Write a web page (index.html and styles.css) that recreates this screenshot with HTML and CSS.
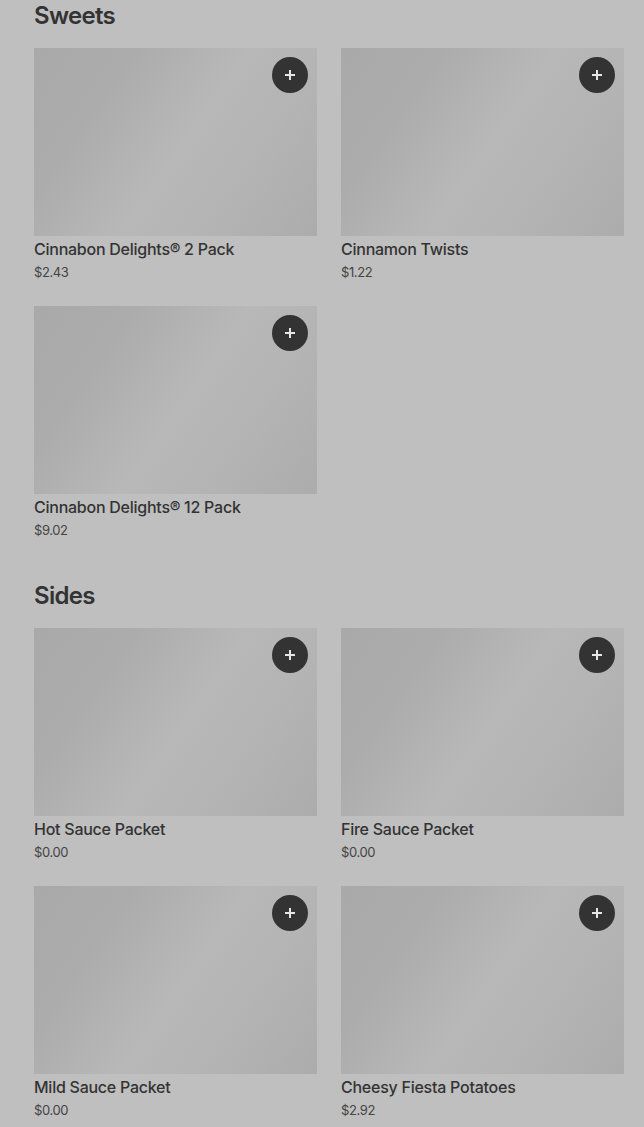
FILE: index.html
```html
<!DOCTYPE html>
<html lang="en">
<head>
  <meta charset="UTF-8" />
  <meta name="viewport" content="width=device-width, initial-scale=1.0" />
  <title>Menu</title>
  <link rel="stylesheet" href="styles.css">
</head>
<body>
  <section class="section">
    <h2 class="section-title">Sweets</h2>
    <div class="grid">
      <div class="item">
        <div class="thumb"><button class="add"><svg viewBox="0 0 12 12"><path d="M6 1v10M1 6h10" /></svg></button></div>
        <div class="name">Cinnabon Delights® 2 Pack</div>
        <div class="price">$2.43</div>
      </div>
      <div class="item">
        <div class="thumb"><button class="add"><svg viewBox="0 0 12 12"><path d="M6 1v10M1 6h10" /></svg></button></div>
        <div class="name">Cinnamon Twists</div>
        <div class="price">$1.22</div>
      </div>
      <div class="item">
        <div class="thumb"><button class="add"><svg viewBox="0 0 12 12"><path d="M6 1v10M1 6h10" /></svg></button></div>
        <div class="name">Cinnabon Delights® 12 Pack</div>
        <div class="price">$9.02</div>
      </div>
    </div>
  </section>

  <section class="section">
    <h2 class="section-title">Sides</h2>
    <div class="grid">
      <div class="item">
        <div class="thumb"><button class="add"><svg viewBox="0 0 12 12"><path d="M6 1v10M1 6h10" /></svg></button></div>
        <div class="name">Hot Sauce Packet</div>
        <div class="price">$0.00</div>
      </div>
      <div class="item">
        <div class="thumb"><button class="add"><svg viewBox="0 0 12 12"><path d="M6 1v10M1 6h10" /></svg></button></div>
        <div class="name">Fire Sauce Packet</div>
        <div class="price">$0.00</div>
      </div>
      <div class="item">
        <div class="thumb"><button class="add"><svg viewBox="0 0 12 12"><path d="M6 1v10M1 6h10" /></svg></button></div>
        <div class="name">Mild Sauce Packet</div>
        <div class="price">$0.00</div>
      </div>
      <div class="item">
        <div class="thumb"><button class="add"><svg viewBox="0 0 12 12"><path d="M6 1v10M1 6h10" /></svg></button></div>
        <div class="name">Cheesy Fiesta Potatoes</div>
        <div class="price">$2.92</div>
      </div>
    </div>
  </section>
</body>
</html>
```

FILE: styles.css
```css
body {
  margin: 0;
  padding: 0 20px 0 34px;
  background: #bfbfbf;
  font-family: Inter, "Noto Sans", sans-serif;
  color: #333;
}

.section {
  margin-bottom: 38px;
}

.section-title {
  margin: 0 0 16px;
  font-size: 24px;
  line-height: 32px;
  font-weight: 600;
  letter-spacing: -0.7px;
  color: #333;
}

.grid {
  display: grid;
  grid-template-columns: 283px 283px;
  column-gap: 24px;
  row-gap: 22px;
}

.thumb {
  position: relative;
  height: 188px;
  background: linear-gradient(125deg, #a9a9a9 0%, #acacac 25%, #b8b8b8 52%, #b4b4b4 72%, #acacac 100%);
}

.add {
  position: absolute;
  top: 9px;
  right: 9px;
  display: flex;
  align-items: center;
  justify-content: center;
  width: 36px;
  height: 36px;
  border: none;
  border-radius: 50%;
  background: #333;
  padding: 0;
}

.add svg {
  width: 12px;
  height: 12px;
  stroke: #e6e6e6;
  stroke-width: 2;
  fill: none;
}

.name {
  margin-top: 3px;
  font-size: 16px;
  line-height: 20px;
  font-weight: 500;
  letter-spacing: -0.25px;
  color: #333;
}

.price {
  margin-top: 1px;
  font-size: 13px;
  line-height: 24px;
  color: #444;
  letter-spacing: -0.4px;
}
```
